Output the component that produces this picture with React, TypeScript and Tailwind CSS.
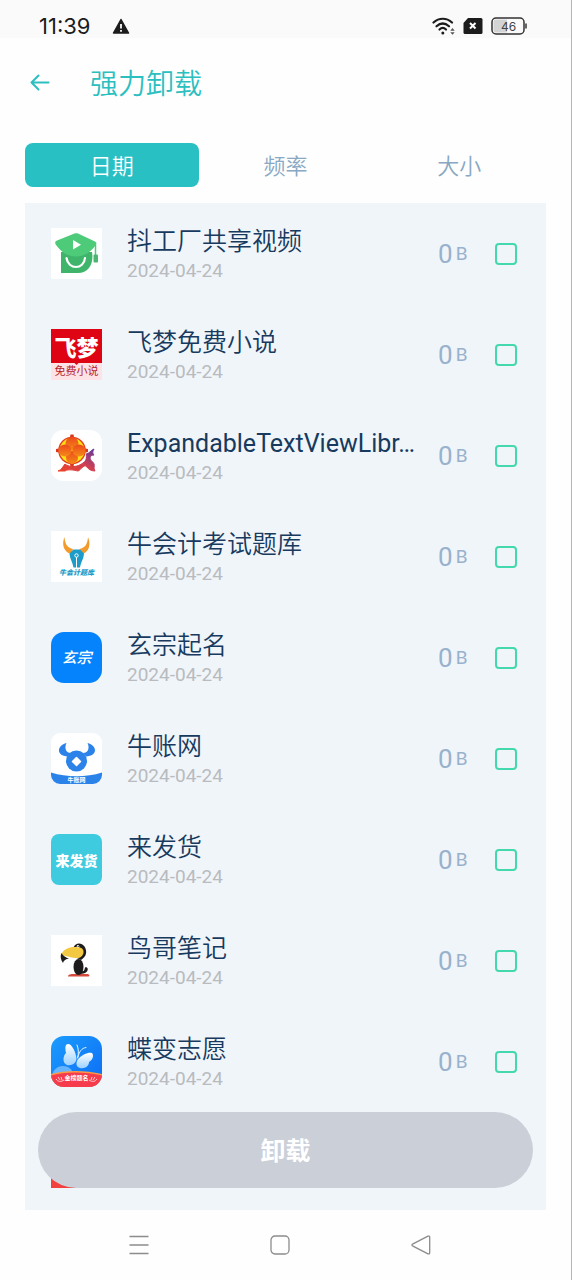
import { useState } from 'react'
import type { ReactNode } from 'react'

const cjk = '"Noto Sans CJK SC", sans-serif'

function LogoCap() {
    return (
        <>
            <rect width="51" height="51" fill="#fff" />
            <path d="M10 24h31c2 11-3 21-14 21H10z" fill="#3fb56c" />
            <path d="M23.500 5.500 6 12.500c-2 .8-2.400 2.500-1 4.500C9 22 15 28.500 25 28.500s16-6.500 20-11.500c1-1.800.2-3-1.500-3.700L27 5.500c-1-.5-2.300-.5-3.500 0z" fill="#4ecb79" />
            <path d="M22 12v9.500l8-4.700z" fill="#fff" />
            <path d="M15.500 30C17 42 33 42 34 30" fill="none" stroke="#fff" strokeWidth="2.200" strokeLinecap="round" />
            <path d="M44.500 17v10" stroke="#4ecb79" strokeWidth="1.500" />
            <rect x="42.500" y="26.500" width="4.500" height="8" rx="1" fill="#4ab672" />
        </>
    )
}

function LogoFeimeng() {
    return (
        <>
            <rect width="51" height="51" fill="#fde3e5" />
            <path d="M0 0h51v34H27.500L25.500 36l-2-2H0z" fill="#df0414" />
            <text x="25.500" y="27" textAnchor="middle" fontFamily={cjk} fontSize="22" fontWeight="900" fill="#fff">飞梦</text>
            <text x="25.500" y="46" textAnchor="middle" fontFamily={cjk} fontSize="11" fill="#b5212c">免费小说</text>
        </>
    )
}

function LogoLantern() {
    return (
        <>
            <defs>
                <linearGradient id="ribbon" x1="0" y1="1" x2="1" y2="0">
                    <stop offset="0" stopColor="#ee4128" />
                    <stop offset=".5" stopColor="#d23f50" />
                    <stop offset="1" stopColor="#5f3aa5" />
                </linearGradient>
                <linearGradient id="petal" x1="0" y1="0" x2="0" y2="1">
                    <stop offset="0" stopColor="#ec4a1c" />
                    <stop offset="1" stopColor="#f58a17" />
                </linearGradient>
            </defs>
            <rect width="51" height="51" rx="12" fill="#fff" />
            <path d="M7 41c4-1 5-5 7-7 5 4 13 3 18-1 3-2 4-5 3-9 3 0 5-4 8-5-2 3-1 5 0 6-2 0-4 1-4 3 1 4 3 3 4 6 1 2-1 4 1 7-4 0-7-2-9-5-3-1-5 4-8 5-5-1-10-2-13 0z" fill="url(#ribbon)" stroke="url(#ribbon)" strokeWidth="1" />
            <circle cx="21" cy="20.500" r="14.500" fill="#fff" />
            <circle cx="21" cy="20.500" r="13.800" fill="#e33b1d" />
            <circle cx="21" cy="20.500" r="12.500" fill="#ffdf16" />
            <ellipse cx="21" cy="13.500" rx="6.500" ry="6.500" fill="url(#petal)" />
            <ellipse cx="21" cy="27.500" rx="6" ry="6.500" fill="url(#petal)" />
            <ellipse cx="14" cy="20.500" rx="6.500" ry="6" fill="url(#petal)" />
            <ellipse cx="28" cy="20.500" rx="6.500" ry="6" fill="url(#petal)" />
            <path d="M19 7h4l-.5-2.500h-3zM19 34h4l-.5 2.500h-3zM7.500 18.500v4L5 22v-3zM34.500 18.500v4l2.500-.5v-3z" fill="#d9381c" />
        </>
    )
}

function LogoOxPen() {
    return (
        <>
            <rect width="51" height="51" fill="#fff" />
            <path d="M13.500 6c-3 7-1 15 6.500 17l2-5c-5-1-8-4-8.500-12zM37 6c3 7 1.500 15-6 17l-2.500-5c5-1 8-4 8.500-12z" fill="#f29a2b" />
            <path d="M18.500 22.500l4-4h6.500l4 4c-.5 6-3 8-4 14h-6.500c-1-6-3.500-8-4-14z" fill="#1e9cc9" />
            <path d="M25.500 37V25.500" stroke="#fff" strokeWidth="1" />
            <circle cx="25.500" cy="24.500" r="1.700" fill="#1e9cc9" stroke="#fff" strokeWidth="1" />
            <text x="25.500" y="44" textAnchor="middle" fontFamily={cjk} fontSize="7" fontStyle="italic" fontWeight="900" fill="#1e9cc9">牛会计题库</text>
        </>
    )
}

function LogoXuanzong() {
    return (
        <>
            <rect width="51" height="51" rx="13" fill="#0583fd" />
            <text x="25.500" y="31" textAnchor="middle" fontFamily={cjk} fontSize="15" fontStyle="italic" fontWeight="500" fill="#fff">玄宗</text>
        </>
    )
}

function LogoOxCoin() {
    return (
        <>
            <rect width="51" height="51" rx="9" fill="#fff" />
            <path d="M0 39.500c16 5 35 5 51 0V42a9 9 0 0 1-9 9H9a9 9 0 0 1-9-9z" fill="#2b82e8" />
            <path d="M15.500 10C6 12 4.500 23 17 23.500l3-3.500c-5 0-7-5-4.500-10zM36.500 10C46 12 47.500 23 35 23.500L32 20c5 0 7-5 4.500-10z" fill="#2b82e8" />
            <circle cx="25.500" cy="28" r="10.500" fill="#2b82e8" />
            <path d="M25.500 24.500l4 4-4 4-4-4z" fill="#fff" stroke="#fff" strokeWidth="1.500" strokeLinejoin="round" />
            <text x="25.500" y="49" textAnchor="middle" fontFamily={cjk} fontSize="6" fontWeight="700" fill="#fff">牛账网</text>
        </>
    )
}

function LogoLaifahuo() {
    return (
        <>
            <rect width="51" height="51" rx="8" fill="#3fcbdf" />
            <text x="25.500" y="32" textAnchor="middle" fontFamily={cjk} fontSize="14" fontWeight="900" fill="#fff">来发货</text>
        </>
    )
}

function LogoToucan() {
    return (
        <>
            <rect width="51" height="51" fill="#fff" />
            <path d="M17 41.500c0-2 3-2.500 6-2.500h13c3 0 3 2.500 1 2.500z" fill="#d5493c" />
            <path d="M22.500 12.500c2-5 8-5 11-1 3 5 2 10-3.500 13.500L26 23z" fill="#1d1b1c" />
            <ellipse cx="27.500" cy="32" rx="5" ry="8" fill="#1d1b1c" />
            <path d="M30 36c3 1 3.500-1 4-3.500 2.500-1 4 2 1.500 4.500-2 1.800-4 1.500-6 2z" fill="#1d1b1c" />
            <path d="M10 20c2-6 9-8.500 15-8 5-.5 8 2 7.500 5.500-.5 3.500-3 5.500-6.500 5.500-5 0-9-1.500-16-3z" fill="#f3c944" />
            <path d="M10.500 18c-1.500 3-1 6.500 1.500 10 .5-2.500 3-4 6-4.500-3-1-6-2.500-7.500-5.500z" fill="#1d1b1c" />
            <circle cx="27" cy="11.200" r="1.200" fill="#fff" />
            <circle cx="27.200" cy="11.400" r=".6" fill="#1d1b1c" />
        </>
    )
}

function LogoButterfly() {
    return (
        <>
            <defs>
                <linearGradient id="sky" x1="0" y1="0" x2="1" y2="1">
                    <stop offset="0" stopColor="#1b9cfd" />
                    <stop offset="1" stopColor="#0d6cf5" />
                </linearGradient>
                <linearGradient id="wing" x1="0" y1="0" x2="0" y2="1">
                    <stop offset="0" stopColor="#fff" />
                    <stop offset="1" stopColor="#9dd2ff" />
                </linearGradient>
                <clipPath id="tile">
                    <rect width="51" height="51" rx="13" />
                </clipPath>
            </defs>
            <g clipPath="url(#tile)">
                <rect width="51" height="51" fill="url(#sky)" />
                <circle cx="12" cy="41" r="11" fill="#68b5fc" />
                <path d="M0 38c14-4 34-4 51 0v13H0z" fill="#fb9a43" />
                <path d="M0 39.500c14-4 34-4 51 0V51H0z" fill="#f53b4c" />
                <path d="M25.500 23C25 16 21 8 17 8c-3 0-3 4-2 9-3 3-4 10 1 12 5 1 9-2 9.500-6z" fill="url(#wing)" />
                <path d="M27 23c4-4 10-7 14-6 2 2 1 7-3 9 0 4-4 7-9 6-4-1-4.500-5-2-9z" fill="url(#wing)" />
                <path d="M26.500 22c1.500-5 1-9-.5-13M27 21c1-5 3.500-9 8-9.500" fill="none" stroke="#e6f4ff" strokeWidth="1" strokeLinecap="round" />
                <text x="25.500" y="44" textAnchor="middle" fontFamily={cjk} fontSize="6" fontWeight="700" fill="#fff">金榜题名</text>
                <path d="M5 43c2 3 5 3 8 1M7 41l2 3M10 41l1 3M46 43c-2 3-5 3-8 1M44 41l-2 3M41 41l-1 3" fill="none" stroke="#ffd0d0" strokeWidth="1" />
            </g>
        </>
    )
}

function LogoRed() {
    return <rect width="51" height="51" fill="#f2403f" />
}

interface AppItem {
    name: string
    date: string
    logo: ReactNode
    latin?: boolean
}

const apps: AppItem[] = [
    { name: '抖工厂共享视频', date: '2024-04-24', logo: <LogoCap /> },
    { name: '飞梦免费小说', date: '2024-04-24', logo: <LogoFeimeng /> },
    { name: 'ExpandableTextViewLibr…', date: '2024-04-24', logo: <LogoLantern />, latin: true },
    { name: '牛会计考试题库', date: '2024-04-24', logo: <LogoOxPen /> },
    { name: '玄宗起名', date: '2024-04-24', logo: <LogoXuanzong /> },
    { name: '牛账网', date: '2024-04-24', logo: <LogoOxCoin /> },
    { name: '来发货', date: '2024-04-24', logo: <LogoLaifahuo /> },
    { name: '鸟哥笔记', date: '2024-04-24', logo: <LogoToucan /> },
    { name: '蝶变志愿', date: '2024-04-24', logo: <LogoButterfly /> },
]

const tabs = ['日期', '频率', '大小']

function StatusBar() {
    return (
        <div className="flex h-[38px] shrink-0 items-end justify-between bg-[#fafafa] pr-11 pl-[39px] text-[#1c1c1c]">
            <div className="flex h-6 items-center gap-[22px]">
                <span className="font-['Inter'] text-[22px] leading-6">11:39</span>
                <svg width="18" height="16" viewBox="0 0 18 16">
                    <path d="M9 1.500 16.500 15h-15z" fill="currentColor" stroke="currentColor" strokeWidth="1.500" strokeLinejoin="round" />
                    <path d="M9 6v4.500M9 12v1.800" stroke="#fafafa" strokeWidth="1.800" />
                </svg>
            </div>
            <div className="flex h-6 items-center gap-2">
                <svg width="23" height="18" viewBox="0 0 23 18">
                    <g fill="none" stroke="currentColor" strokeWidth="2.200" strokeLinecap="round">
                        <path d="M1.500 5.500c5.500-5 13-5 18.500 0" />
                        <path d="M4.500 9.300c4-3.600 8.500-3.600 12.500 0" />
                        <path d="M7.500 12.500c2-1.900 4.500-1.900 6.500 0" />
                    </g>
                    <circle cx="10.800" cy="16" r="1.500" fill="currentColor" />
                    <path d="M20.500 11l2.200 2.700h-4.400zM20.500 17.700l2.200-2.500h-4.400z" fill="#555" />
                </svg>
                <svg width="20" height="16" viewBox="0 0 20 16">
                    <path d="M5 0h13a1.500 1.500 0 0 1 1.500 1.500v13A1.500 1.500 0 0 1 18 16H2a1.500 1.500 0 0 1-1.500-1.500V5z" fill="currentColor" />
                    <path d="M7 5l5.500 5.500M12.500 5 7 10.500" stroke="#fff" strokeWidth="2" />
                </svg>
                <svg width="36" height="18" viewBox="0 0 36 18">
                    <rect x="1" y="1" width="32" height="16" rx="4" fill="#fafafa" stroke="#333" strokeWidth="1.500" />
                    <path d="M5 2.500h11v13H5a2.500 2.500 0 0 1-2.500-2.500V5A2.500 2.500 0 0 1 5 2.500z" fill="#d4d4d4" />
                    <path d="M35 6.500v5" stroke="#333" strokeWidth="1.500" />
                    <text x="17.500" y="13.500" textAnchor="middle" fontFamily="Inter" fontSize="12" fill="#444">46</text>
                </svg>
            </div>
        </div>
    )
}

function AppRow({ app, checked, onToggle }: { app: AppItem; checked: boolean; onToggle: () => void }) {
    return (
        <li>
            <label className="flex h-[101px] items-center pr-[29px] pl-[26px]">
                <svg className="shrink-0" width="51" height="51" viewBox="0 0 51 51">
                    {app.logo}
                </svg>
                <span className="ml-[25px] flex min-w-0 flex-1 flex-col">
                    <span
                        className={
                            app.latin
                                ? 'truncate text-[25px] leading-[34px] text-[#173a5e]'
                                : 'truncate text-[25px] leading-[34px] font-[350] text-[#173a5e]'
                        }
                    >
                        {app.name}
                    </span>
                    <span className="text-[19px] leading-6 text-[#b9bbbe]">{app.date}</span>
                </span>
                <span className="ml-4 flex w-[30px] shrink-0 items-center gap-[3px] text-[#98b1cc]">
                    <span className="text-[26px] leading-8">0</span>
                    <span className="text-[19px] leading-8">B</span>
                </span>
                <input
                    type="checkbox"
                    checked={checked}
                    onChange={onToggle}
                    className="ml-[27px] size-[22px] shrink-0 appearance-none rounded-sm border-2 border-[#43d8ad] checked:bg-[#43d8ad]"
                />
            </label>
        </li>
    )
}

function NavBar() {
    return (
        <nav className="flex h-[70px] shrink-0 items-center justify-center gap-[121px] pr-[11px] text-[#8c8c8c]">
            <button type="button" aria-label="菜单">
                <svg width="20" height="20" viewBox="0 0 20 20" fill="none" stroke="currentColor" strokeWidth="1.300">
                    <path d="M.5 1.500h19M.5 10h19M.5 18.500h19" />
                </svg>
            </button>
            <button type="button" aria-label="主页">
                <svg width="20" height="20" viewBox="0 0 20 20" fill="none" stroke="currentColor" strokeWidth="1.300">
                    <rect x="1" y="1" width="18" height="18" rx="4" />
                </svg>
            </button>
            <button type="button" aria-label="后退">
                <svg width="20" height="20" viewBox="0 0 20 20" fill="none" stroke="currentColor" strokeWidth="1.300" strokeLinejoin="round">
                    <path d="M1.500 9.200 17 1.200c1-.4 1.700 0 1.700 1v15.600c0 1-.7 1.400-1.700 1L1.500 10.800c-.8-.5-.8-1.100 0-1.600z" />
                </svg>
            </button>
        </nav>
    )
}

export default function App() {
    const [tab, setTab] = useState(0)
    const [selected, setSelected] = useState<string[]>([])

    const toggle = (name: string) =>
        setSelected(prev => (prev.includes(name) ? prev.filter(n => n !== name) : [...prev, name]))

    return (
        <div className="flex h-screen flex-col border-r border-[#b5b5b5] bg-[#fefefe] font-['Roboto','Noto_Sans_CJK_SC',sans-serif]">
            <StatusBar />

            <header className="flex h-[90px] shrink-0 items-center gap-10 pl-[30px] text-[#2bbfc0]">
                <button type="button" aria-label="返回">
                    <svg width="20" height="18" viewBox="0 0 20 18" fill="none" stroke="currentColor" strokeWidth="2" strokeLinecap="round" strokeLinejoin="round">
                        <path d="M8.500 1.500 1.500 8.500l7 7M1.500 8.500h17" />
                    </svg>
                </button>
                <h1 className="pt-1 text-[28px] leading-10 font-[350]">强力卸载</h1>
            </header>

            <div className="mx-[25px] mt-[15px] grid shrink-0 grid-cols-3">
                {tabs.map((label, i) => (
                    <button
                        key={label}
                        type="button"
                        onClick={() => setTab(i)}
                        className={
                            i === tab
                                ? 'h-11 rounded-lg bg-[#29c0c3] pt-0.5 text-[22px] font-[350] text-white'
                                : 'h-11 rounded-lg pt-0.5 text-[22px] font-[350] text-[#88a8c3]'
                        }
                    >
                        {label}
                    </button>
                ))}
            </div>

            <main className="relative mx-[25px] mt-4 min-h-0 flex-1 bg-[#f0f5fa]">
                <ul className="h-full overflow-y-auto [scrollbar-width:none]">
                    {apps.map(app => (
                        <AppRow
                            key={app.name}
                            app={app}
                            checked={selected.includes(app.name)}
                            onToggle={() => toggle(app.name)}
                        />
                    ))}
                    <li className="flex h-[101px] items-center pl-[26px]">
                        <svg width="51" height="51" viewBox="0 0 51 51">
                            <LogoRed />
                        </svg>
                    </li>
                </ul>

                {/* Floating action */}
                <button
                    type="button"
                    className="absolute inset-x-[13px] bottom-[22px] h-[76px] rounded-full bg-[#cbcfd8] pt-1 text-[25px] font-bold text-white"
                >
                    卸载
                </button>
            </main>

            <NavBar />
        </div>
    )
}
